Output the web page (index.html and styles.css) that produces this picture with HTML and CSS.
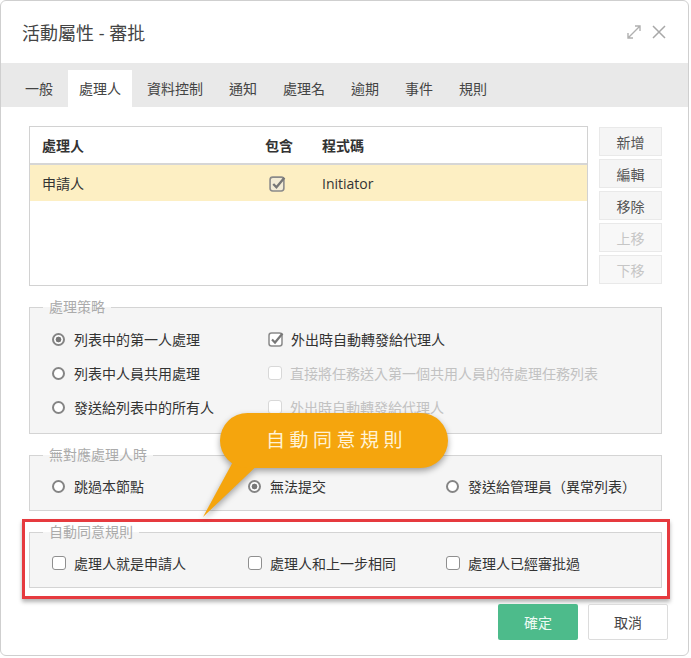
FILE: index.html
```html
<!DOCTYPE html>
<html lang="zh-Hant">
<head>
<meta charset="utf-8">
<title>活動屬性 - 審批</title>
<link rel="stylesheet" href="styles.css">
</head>
<body>
<div class="dialog">
  <div class="header">
    <div class="title">活動屬性 - 審批</div>
    <div class="win-icons">
      <svg class="ico-expand" width="16" height="16" viewBox="0 0 16 16"><path d="M2 14 L14 2 M9 2 H14 V7 M2 9 V14 H7" fill="none" stroke="#b0b0b0" stroke-width="1.4"/></svg>
      <svg class="ico-close" width="14" height="14" viewBox="0 0 14 14"><path d="M1 1 L13 13 M13 1 L1 13" fill="none" stroke="#a8a8a8" stroke-width="1.5"/></svg>
    </div>
  </div>
  <div class="tabs">
    <div class="tab">一般</div>
    <div class="tab active">處理人</div>
    <div class="tab">資料控制</div>
    <div class="tab">通知</div>
    <div class="tab">處理名</div>
    <div class="tab">逾期</div>
    <div class="tab">事件</div>
    <div class="tab">規則</div>
  </div>
  <div class="content">
    <div class="top">
      <div class="list">
        <div class="list-row list-head">
          <div class="cell">處理人</div>
          <div class="cell">包含</div>
          <div class="cell">程式碼</div>
        </div>
        <div class="list-row selected">
          <div class="cell">申請人</div>
          <div class="cell cell-check">
            <svg width="17" height="17" viewBox="0 0 16 16"><rect x="1" y="2" width="13" height="13" rx="2.5" fill="#f3ecd6" stroke="#8a8a8a" stroke-width="1.5"/><path d="M4 8.5 L7 11.5 L14.5 2.5" fill="none" stroke="#777" stroke-width="2.2"/></svg>
          </div>
          <div class="cell">Initiator</div>
        </div>
      </div>
      <div class="side-buttons">
        <div class="sbtn">新增</div>
        <div class="sbtn">編輯</div>
        <div class="sbtn">移除</div>
        <div class="sbtn disabled">上移</div>
        <div class="sbtn disabled">下移</div>
      </div>
    </div>

    <fieldset class="group group-strategy">
      <legend>處理策略</legend>
      <div class="strategy-grid">
        <div class="opt"><span class="radio checked"></span>列表中的第一人處理</div>
        <div class="opt"><svg class="cbx" width="16" height="16" viewBox="0 0 16 16"><rect x="1" y="2" width="13" height="13" rx="2.5" fill="#fff" stroke="#8a8a8a" stroke-width="1.5"/><path d="M4 8.5 L7 11.5 L14.5 2.5" fill="none" stroke="#777" stroke-width="2.2"/></svg>外出時自動轉發給代理人</div>
        <div class="opt"><span class="radio"></span>列表中人員共用處理</div>
        <div class="opt disabled"><span class="cb"></span>直接將任務送入第一個共用人員的待處理任務列表</div>
        <div class="opt"><span class="radio"></span>發送給列表中的所有人</div>
        <div class="opt disabled"><span class="cb"></span>外出時自動轉發給代理人</div>
      </div>
    </fieldset>

    <fieldset class="group">
      <legend>無對應處理人時</legend>
      <div class="three-grid">
        <div class="opt"><span class="radio"></span>跳過本節點</div>
        <div class="opt"><span class="radio checked"></span>無法提交</div>
        <div class="opt"><span class="radio"></span>發送給管理員（異常列表）</div>
      </div>
    </fieldset>

    <div class="highlight">
      <fieldset class="group">
        <legend>自動同意規則</legend>
        <div class="three-grid">
          <div class="opt"><span class="cb"></span>處理人就是申請人</div>
          <div class="opt"><span class="cb"></span>處理人和上一步相同</div>
          <div class="opt"><span class="cb"></span>處理人已經審批過</div>
        </div>
      </fieldset>
    </div>
  </div>
  <div class="footer">
    <div class="btn btn-ok">確定</div>
    <div class="btn btn-cancel">取消</div>
  </div>

  <div class="callout">
    <svg class="callout-shape" width="260" height="112" viewBox="0 0 260 112">
      <path d="M40 48 L70 48 L8 107 Z" fill="#f5a50d"/>
      <rect x="25" y="3" width="228" height="55" rx="27.5" fill="#f5a50d"/>
    </svg>
    <span class="callout-text">自動同意規則</span>
  </div>
</div>
</body>
</html>
```

FILE: styles.css
```css
body {
  margin: 0;
  font-family: "Open Sans", "Noto Sans CJK TC", sans-serif;
  color: #333;
  background: #fff;
}

.dialog {
  position: relative;
  width: 689px;
  height: 656px;
  box-sizing: border-box;
  border: 1px solid #cfcfcf;
  border-radius: 6px;
  background: #fff;
  overflow: hidden;
}

.header {
  height: 62px;
  display: flex;
  align-items: center;
  padding-left: 21px;
  padding-right: 22px;
}

.title {
  font-size: 18px;
  color: #444;
  line-height: 24px;
  margin-top: 1px;
}

.win-icons {
  margin-left: auto;
  display: flex;
  align-items: center;
  gap: 10px;
  margin-top: -1px;
}

.tabs {
  height: 44px;
  background: #e9e9e9;
  display: flex;
  align-items: flex-end;
  gap: 4px;
  padding-left: 13px;
}

.tab {
  height: 37px;
  line-height: 37px;
  padding: 0 11px;
  font-size: 14px;
  color: #444;
}

.tab.active {
  background: #fff;
}

.content {
  padding: 19px 26px 0 28px;
}

.top {
  display: flex;
  gap: 11px;
}

.list {
  flex: 1;
  height: 160px;
  box-sizing: border-box;
  border: 1px solid #d2d2d2;
}

.list-row {
  display: grid;
  grid-template-columns: 223px 57px 1fr;
  height: 36px;
  align-items: center;
  font-size: 14px;
}

.list-head {
  font-weight: bold;
  color: #333;
  border-bottom: 2px solid #d6d6d6;
}

.list-row.selected {
  background: #fdefc3;
}

.cell {
  padding-left: 12px;
}

.cell-check {
  padding-left: 16px;
  display: flex;
  align-items: center;
}

.side-buttons {
  width: 63px;
  display: flex;
  flex-direction: column;
  gap: 3px;
  padding-top: 1px;
}

.sbtn {
  height: 29px;
  box-sizing: border-box;
  border: 1px solid #e9e9e9;
  background: #f5f5f5;
  font-size: 14px;
  color: #555;
  display: flex;
  align-items: center;
  justify-content: center;
}

.sbtn.disabled {
  color: #c6c6c6;
  background: #f8f8f8;
}

.group {
  margin: 11px 0 0 0;
  border: 1px solid #d4d4d4;
  background: #f5f5f5;
  padding: 4px 21px 7px 22px;
  min-width: 0;
}

.group legend {
  font-size: 14px;
  line-height: 20px;
  color: #ababab;
  padding: 0 6px;
  margin-left: -9px;
}

.group-strategy {
  padding-top: 5px;
  padding-bottom: 9px;
}

.strategy-grid {
  display: grid;
  grid-template-columns: 216px 1fr;
}

.three-grid {
  display: grid;
  grid-template-columns: 196px 198px 1fr;
}

.opt {
  height: 34px;
  display: flex;
  align-items: center;
  font-size: 14px;
  color: #333;
  white-space: nowrap;
}

.opt.disabled {
  color: #c2c2c2;
}

.radio {
  width: 13px;
  height: 13px;
  box-sizing: border-box;
  border: 2px solid #858585;
  border-radius: 50%;
  background: #fff;
  margin-right: 9px;
  flex: none;
}

.radio.checked {
  background: radial-gradient(circle, #777 0 2.6px, #fff 3.2px);
}

.cb {
  width: 14px;
  height: 14px;
  box-sizing: border-box;
  border: 1.5px solid #8f8f8f;
  border-radius: 3px;
  background: #fff;
  margin-right: 8px;
  flex: none;
}

.opt.disabled .cb {
  border-color: #d8d8d8;
}

.cbx {
  margin-right: 7px;
  flex: none;
}

.highlight {
  margin: 8px -8px 0 -7px;
  border: 3px solid #e63a3f;
  padding: 0 5px 8px 4px;
  box-shadow: 0 3px 4px rgba(0, 0, 0, 0.3);
}

.highlight .group {
  margin-top: 0;
}

.footer {
  display: flex;
  justify-content: flex-end;
  gap: 10px;
  padding-right: 20px;
  margin-top: 5px;
}

.btn {
  width: 80px;
  height: 36px;
  box-sizing: border-box;
  display: flex;
  align-items: center;
  justify-content: center;
  font-size: 14px;
  border-radius: 2px;
}

.btn-ok {
  background: #4dbb8b;
  color: #eefaf4;
}

.btn-cancel {
  background: #fff;
  border: 1px solid #dcdcdc;
  color: #444;
}

.callout {
  position: absolute;
  left: 194px;
  top: 409px;
  width: 260px;
  height: 112px;
}

.callout-shape {
  display: block;
  filter: drop-shadow(0 3px 3px rgba(0, 0, 0, 0.35));
}

.callout-text {
  position: absolute;
  left: 25px;
  top: 3px;
  width: 228px;
  height: 55px;
  box-sizing: border-box;
  padding-left: 5px;
  line-height: 55px;
  text-align: center;
  font-size: 19px;
  letter-spacing: 4.5px;
  color: #fff3d6;
}
```
